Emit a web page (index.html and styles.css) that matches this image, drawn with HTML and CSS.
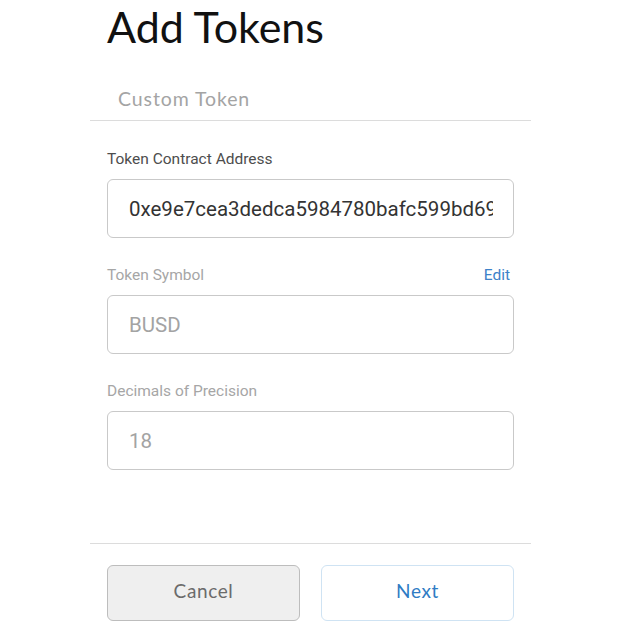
FILE: index.html
```html
<!DOCTYPE html>
<html>
<head>
<meta charset="utf-8">
<link rel="stylesheet" href="styles.css">
</head>
<body>
<div class="page">
  <h1 class="title">Add Tokens</h1>
  <div class="tabs"><span class="tab">Custom Token</span></div>
  <div class="form">
    <div class="field">
      <div class="label-row"><label class="label dark" for="addr">Token Contract Address</label></div>
      <input class="input dark" id="addr" type="text" readonly value="0xe9e7cea3dedca5984780bafc599bd69add087d56">
    </div>
    <div class="field">
      <div class="label-row"><label class="label" for="sym">Token Symbol</label><span class="edit">Edit</span></div>
      <input class="input" id="sym" type="text" readonly value="BUSD">
    </div>
    <div class="field">
      <div class="label-row"><label class="label" for="dec">Decimals of Precision</label></div>
      <input class="input" id="dec" type="text" readonly value="18">
    </div>
  </div>
  <div class="footer">
    <button class="btn cancel">Cancel</button>
    <button class="btn next">Next</button>
  </div>
</div>
</body>
</html>
```
FILE: styles.css
```css
* { box-sizing: border-box; }
html, body { margin: 0; padding: 0; background: #fff; }
body { width: 641px; height: 644px; overflow: hidden; }
.page { margin-left: 90px; width: 441px; }
.title {
  margin: 0;
  padding: 2px 0 0 17px;
  height: 80px;
  font-family: "Lato", sans-serif;
  font-weight: 400;
  font-size: 43px;
  line-height: 50px;
  color: #111;
}
.tabs {
  height: 41px;
  border-bottom: 1px solid #dcdcdc;
  padding-left: 28px;
}
.tab {
  font-family: "Lato", sans-serif;
  font-size: 19.5px;
  letter-spacing: 0.9px;
  line-height: 38px;
  color: #a4a4a4;
}
.form { padding: 28px 17px 0 17px; height: 423px; border-bottom: 1px solid #dcdcdc; }
.field { margin-bottom: 27px; }
.label-row {
  display: flex;
  justify-content: space-between;
  align-items: center;
  height: 20px;
  margin-bottom: 10px;
  padding-right: 4px;
}
.label { font-family: "Roboto", sans-serif; font-size: 15.5px; color: #a6a6a6; }
.label.dark { color: #4d4d4d; }
.edit { font-family: "Roboto", sans-serif; font-size: 15.5px; color: #3d82c9; }
.input {
  display: block;
  width: 100%;
  height: 59px;
  border: 1px solid #c9c9c9;
  border-radius: 6px;
  padding: 0 20px 0 21px;
  margin: 0;
  background: #fff;
  outline: none;
  font-family: "Roboto", sans-serif;
  font-size: 20.5px;
  color: #a3a3a3;
}
.input.dark { color: #333; }
.footer {
  display: flex;
  gap: 21px;
  padding: 21px 17px 0 17px;
}
.btn {
  width: 193px;
  height: 56px;
  border-radius: 6px;
  padding: 0 0 5px 0;
  font-family: "Lato", sans-serif;
  font-size: 19px;
  letter-spacing: 0.6px;
  background: #fff;
  cursor: pointer;
}
.cancel { background: #efefef; border: 1px solid #bdbdbd; color: #6b6b6b; }
.next { border: 1px solid #cfe3f3; color: #2f7cc4; }
```
